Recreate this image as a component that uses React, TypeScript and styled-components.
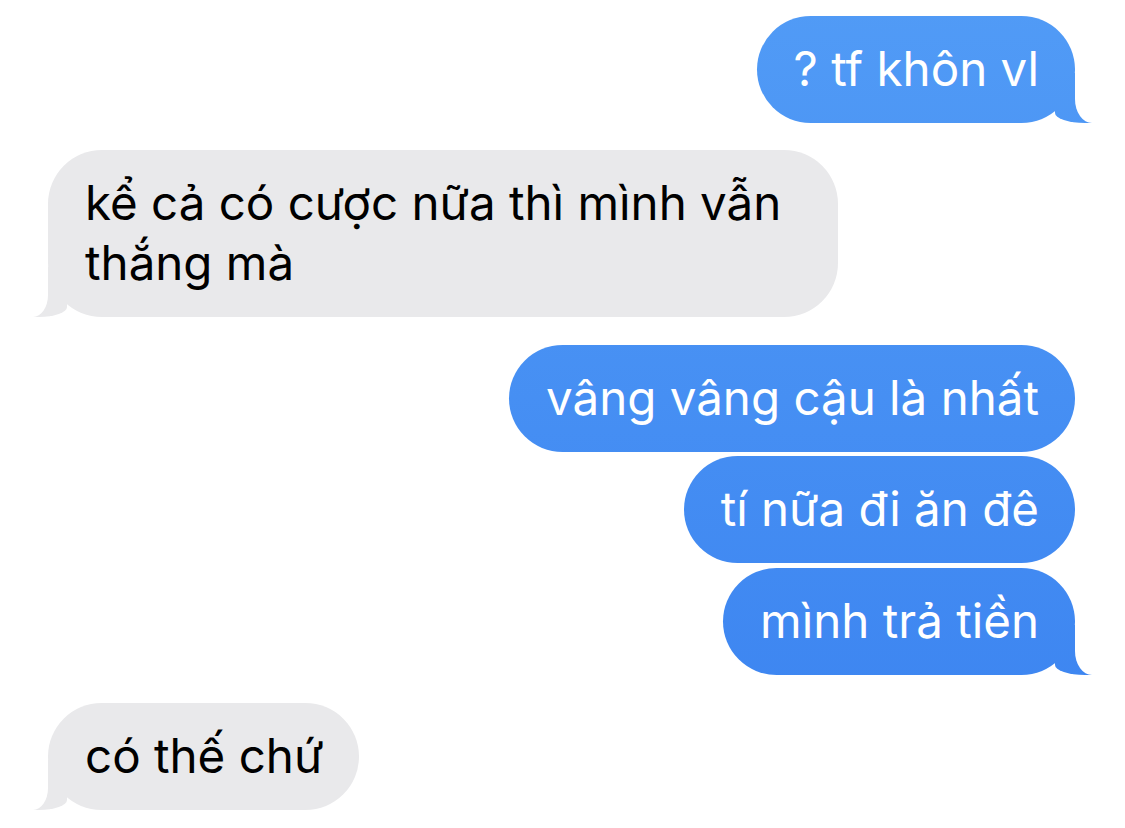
import styled, { createGlobalStyle, css } from 'styled-components'

const GlobalStyle = createGlobalStyle`
  html, body {
    margin: 0;
    padding: 0;
    background: #ffffff;
  }
  body {
    font-family: Inter, "Noto Sans", "Liberation Sans", sans-serif;
    -webkit-font-smoothing: antialiased;
  }
`

type Msg = { text: string; sent: boolean; tail: boolean; gap: number }

const messages: Msg[] = [
  { text: '? tf khôn vl', sent: true, tail: true, gap: 0 },
  { text: 'kể cả có cược nữa thì mình vẫn thắng mà', sent: false, tail: true, gap: 27 },
  { text: 'vâng vâng cậu là nhất', sent: true, tail: false, gap: 28 },
  { text: 'tí nữa đi ăn đê', sent: true, tail: false, gap: 4 },
  { text: 'mình trả tiền', sent: true, tail: true, gap: 5 },
  { text: 'có thế chứ', sent: false, tail: true, gap: 28 },
]

function App() {
  return (
    <>
      <GlobalStyle />
      <Thread>
        {messages.map((m, i) => (
          <Bubble key={i} $sent={m.sent} $tail={m.tail} $gap={m.gap}>
            {m.text}
          </Bubble>
        ))}
      </Thread>
    </>
  )
}

export default App

const Thread = styled.div`
  width: 1125px;
  height: 828px;
  box-sizing: border-box;
  padding: 16px 50px 0 48px;
  display: flex;
  flex-direction: column;
  overflow: hidden;
`

const sentStyle = css`
  align-self: flex-end;
  color: #ffffff;
  background: linear-gradient(180deg, #519bf6 0%, #3a82f0 100%) fixed;
`

const receivedStyle = css`
  align-self: flex-start;
  color: #000000;
  background: #e9e9eb;
`

// tail: a filled block under the corner, then a white block with a rounded
// corner that carves the outer curve of the tail
const sentTail = css`
  &::before {
    content: '';
    position: absolute;
    bottom: 0;
    right: -17px;
    width: 37px;
    height: 50px;
    background: inherit;
    border-bottom-left-radius: 30px 10px;
  }
  &::after {
    content: '';
    position: absolute;
    bottom: 0;
    right: -60px;
    width: 60px;
    height: 50px;
    background: #ffffff;
    border-bottom-left-radius: 17px 24px;
  }
`

const receivedTail = css`
  &::before {
    content: '';
    position: absolute;
    bottom: 0;
    left: -15px;
    width: 34px;
    height: 50px;
    background: inherit;
    border-bottom-right-radius: 28px 10px;
  }
  &::after {
    content: '';
    position: absolute;
    bottom: 0;
    left: -60px;
    width: 60px;
    height: 50px;
    background: #ffffff;
    border-bottom-right-radius: 15px 22px;
  }
`

const Bubble = styled.div<{ $sent: boolean; $tail: boolean; $gap: number }>`
  position: relative;
  margin-top: ${p => p.$gap}px;
  max-width: 790px;
  box-sizing: border-box;
  padding: 23px 36px 24px 37px;
  border-radius: 54px;
  font-size: 47.5px;
  line-height: 60px;
  ${p => (p.$sent ? sentStyle : receivedStyle)}
  ${p => p.$tail && (p.$sent ? sentTail : receivedTail)}
`
